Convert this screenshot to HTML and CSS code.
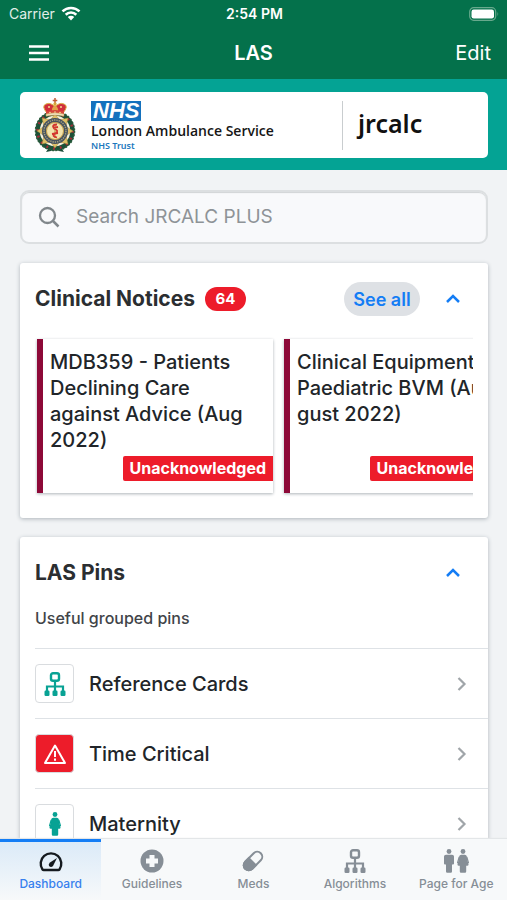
FILE: index.html
```html
<!DOCTYPE html>
<html lang="en">
<head>
<meta charset="utf-8">
<meta name="viewport" content="width=device-width, initial-scale=1">
<title>LAS</title>
<link rel="stylesheet" href="styles.css">
</head>
<body>
<svg class="defs" width="0" height="0" aria-hidden="true">
  <symbol id="tree" viewBox="0 0 22 24">
    <rect x="7" y="1.200" width="8" height="7.600" rx="2" fill="none" stroke="currentColor" stroke-width="2.400"/>
    <path d="M11 9v11M3 20v-5.500h16V20" fill="none" stroke="currentColor" stroke-width="2.200"/>
    <rect x=".5" y="18.500" width="5" height="5.500" rx="1.200" fill="currentColor"/>
    <rect x="8.500" y="18.500" width="5" height="5.500" rx="1.200" fill="currentColor"/>
    <rect x="16.500" y="18.500" width="5" height="5.500" rx="1.200" fill="currentColor"/>
  </symbol>
  <symbol id="woman" viewBox="0 0 12 24">
    <circle cx="6" cy="2.500" r="2.400" fill="currentColor"/>
    <path d="M4.200 5.800h3.600q1.600 0 2 1.500l.3 3 1.400 5q.3 1.400-1 1.400H9.200v5.800q0 1.300-1.200 1.300H4q-1.200 0-1.200-1.300v-5.800H1.500q-1.300 0-1-1.400l1.400-5 .3-3q.4-1.500 2-1.500z" fill="currentColor"/>
    <path d="M2.200 8L.6 13.500l1.500.6M9.800 8l1.600 5.500-1.500.6" fill="none" stroke="currentColor" stroke-width="1.200"/>
  </symbol>
  <symbol id="man" viewBox="0 0 12 24">
    <circle cx="6" cy="2.500" r="2.400" fill="currentColor"/>
    <path d="M3 5.800h6q2 0 2 1.800v7q0 1-1 1H9v7q0 1.200-1.200 1.200H4.200Q3 23.800 3 22.600v-7H2q-1 0-1-1v-7q0-1.800 2-1.800z" fill="currentColor"/>
  </symbol>
  <symbol id="next" viewBox="0 0 10 16">
    <path d="M1.500 2l6 6-6 6" fill="none" stroke="currentColor" stroke-width="2.200"/>
  </symbol>
  <symbol id="up" viewBox="0 0 16 10">
    <path d="M2 8l6-6 6 6" fill="none" stroke="currentColor" stroke-width="2.500"/>
  </symbol>
</svg>
<div class="app">
  <header class="top">
    <div class="status">
      <span class="carrier">Carrier
        <svg width="20" height="15" viewBox="0 0 20 15" aria-hidden="true"><g fill="none" stroke="currentColor" stroke-width="2.600"><path d="M1.500 5.400a12.200 12.200 0 0 1 17 0M4.700 8.700a7.600 7.600 0 0 1 10.600 0"/></g><path d="M10 14.500l-3.200-3.400a4.500 4.500 0 0 1 6.400 0z" fill="currentColor"/></svg>
      </span>
      <span class="time">2:54 PM</span>
      <svg class="battery" width="31" height="14" viewBox="0 0 31 14" aria-hidden="true"><rect x=".7" y=".7" width="26" height="12.600" rx="4" fill="none" stroke="#68a98d" stroke-width="1.200"/><rect x="2.500" y="2.500" width="22.500" height="9" rx="2.200" fill="#fff"/><path d="M28.500 4.800q1.500 2.200 0 4.400z" fill="#68a98d"/></svg>
    </div>
    <div class="nav">
      <button class="menu" aria-label="Menu"><svg width="20" height="16" viewBox="0 0 20 16"><path d="M0 1.500h20M0 8h20M0 14.500h20" stroke="currentColor" stroke-width="2.400"/></svg></button>
      <h1>LAS</h1>
      <button class="edit">Edit</button>
    </div>
  </header>
  <div class="brand">
    <div class="brand-card">
      <svg class="crest" width="44" height="58" viewBox="0 0 44 58" aria-hidden="true">
        <path d="M17 50l-4 6 5-1 4-4 4 4 5 1-4-6z" fill="#174936"/>
        <circle cx="22" cy="35" r="17.500" fill="#f6f0dc" stroke="#1c5038" stroke-width="4.500"/>
        <circle cx="22" cy="35" r="19.500" fill="none" stroke="#2b5c3c" stroke-width="1.500" stroke-dasharray="2 1.500"/>
        <circle cx="22" cy="35" r="17.500" fill="none" stroke="#a82c38" stroke-width="2.500" stroke-dasharray="1.800 5.060"/>
        <path d="M22 18l4.500 6 8.500-2-2 8.500 7 4.500-7 4.500 2 8.500-8.500-2-4.500 6-4.500-6-8.500 2 2-8.500-7-4.500 7-4.500-2-8.500 8.500 2z" fill="#dfc068" stroke="#ab8a3a" stroke-width=".5"/>
        <circle cx="22" cy="35" r="11" fill="none" stroke="#46525f" stroke-width="4"/>
        <circle cx="22" cy="35" r="11" fill="none" stroke="#a9a37c" stroke-width="1.400" stroke-dasharray="1.300 1"/>
        <circle cx="22" cy="35" r="8.500" fill="#f3e3ad" stroke="#b38d3c" stroke-width=".8"/>
        <path d="M22 28v14" stroke="#b3862c"/>
        <path d="M24 28.500q-6 0-3 4 6 2.500 1 5-4 2.500 2 4M25 31l-5 1M25 37l-6 1" fill="none" stroke="#d4342f" stroke-width="1.800"/>
        <path d="M14 17q-6-7-1-9 5-2 9 3 4-5 9-3 5 2-1 9z" fill="#d12f3c" stroke="#d9ae42"/>
        <path d="M22 9q-4 3-3 7h6q1-4-3-7z" fill="#e3a149"/>
        <path d="M13 15.500q9-3 18 0v4q-9-2-18 0z" fill="#d6453b"/>
        <path d="M13 18q9-2.500 18 0v2.200q-9-2-18 0z" fill="#eee0be" stroke="#c0903e" stroke-width=".5"/>
        <path d="M22 2v6M19.700 4.500h4.600" stroke="#c05b35" stroke-width="1.500"/>
        <circle cx="22" cy="8" r="1.700" fill="#d7a53a"/>
        <g fill="#f5dd91"><circle cx="16" cy="11" r="1"/><circle cx="28" cy="11" r="1"/><circle cx="17" cy="16.500" r=".8"/><circle cx="22" cy="16" r=".8"/><circle cx="27" cy="16.500" r=".8"/></g>
      </svg>
      <div class="trust">
        <span class="nhs">NHS</span>
        <strong>London Ambulance Service</strong>
        <small>NHS Trust</small>
      </div>
      <div class="jrcalc">jrcalc</div>
    </div>
  </div>
  <main>
    <label class="search">
      <svg width="22" height="22" viewBox="0 0 22 22" aria-hidden="true"><circle cx="9.500" cy="9.500" r="7.500" fill="none" stroke="currentColor" stroke-width="2.300"/><path d="M15 15l5.500 5.500" stroke="currentColor" stroke-width="2.500"/></svg>
      <input type="search" placeholder="Search JRCALC PLUS" aria-label="Search JRCALC PLUS">
    </label>
    <section class="card notices">
      <div class="card-head">
        <h2>Clinical Notices</h2><span class="count">64</span>
        <button class="see-all">See all</button>
        <button class="toggle" aria-label="Collapse Clinical Notices"><svg width="16" height="10"><use href="#up"/></svg></button>
      </div>
      <div class="strip">
        <article class="notice"><h3>MDB359 - Patients Declining Care against Advice (Aug 2022)</h3><span class="flag">Unacknowledged</span></article>
        <article class="notice"><h3>Clinical Equipment<br>Paediatric BVM (Au<br>gust 2022)</h3><span class="flag">Unacknowledged</span></article>
      </div>
    </section>
    <section class="card pins">
      <div class="card-head">
        <h2>LAS Pins</h2>
        <button class="toggle" aria-label="Collapse LAS Pins"><svg width="16" height="10"><use href="#up"/></svg></button>
      </div>
      <p>Useful grouped pins</p>
      <ul>
        <li><a href="#cards"><span class="tile"><svg width="22" height="24"><use href="#tree"/></svg></span><span class="name">Reference Cards</span><svg width="10" height="16"><use href="#next"/></svg></a></li>
        <li><a href="#critical"><span class="tile alert"><svg width="24" height="22" viewBox="0 0 24 22"><path d="M12 2.500L22 20H2z" fill="none" stroke="currentColor" stroke-width="2" stroke-linejoin="round"/><path d="M12 8v6M12 15.500v2.200" stroke="currentColor" stroke-width="2"/></svg></span><span class="name">Time Critical</span><svg width="10" height="16"><use href="#next"/></svg></a></li>
        <li><a href="#maternity"><span class="tile"><svg width="12" height="24"><use href="#woman"/></svg></span><span class="name">Maternity</span><svg width="10" height="16"><use href="#next"/></svg></a></li>
      </ul>
    </section>
  </main>
  <nav class="tabs">
    <a class="active" href="#dashboard"><svg width="26" height="24" viewBox="0 0 26 24"><path d="M4.500 20.500a10.300 10.300 0 1 1 17 0q-.4.500-1.200.500H5.700q-.8 0-1.200-.500z" fill="none" stroke="currentColor" stroke-width="2.400"/><path d="M19 9l-4 8q-2 2-4 0-1-2 1-3.500z" fill="currentColor"/></svg>Dashboard</a>
    <a href="#guidelines"><svg width="24" height="24" viewBox="0 0 24 24"><circle cx="12" cy="12" r="11.500" fill="currentColor"/><path d="M9.500 6h5v3.500H18v5h-3.500V18h-5v-3.500H6v-5h3.500z" fill="#f7f9fa"/></svg>Guidelines</a>
    <a href="#meds"><svg width="24" height="24" viewBox="0 0 24 24"><g transform="rotate(-45 12 12)"><rect x="1" y="7" width="22" height="10" rx="5" fill="none" stroke="currentColor" stroke-width="2"/><path d="M12 6v12H6A6 6 0 0 1 6 6z" fill="currentColor"/></g></svg>Meds</a>
    <a href="#algorithms"><svg width="22" height="24"><use href="#tree"/></svg>Algorithms</a>
    <a href="#age"><span class="pair"><svg width="12" height="24"><use href="#man"/></svg><svg width="12" height="24"><use href="#woman"/></svg></span>Page for Age</a>
  </nav>
</div>
</body>
</html>
```
FILE: styles.css
```css
* { box-sizing: border-box; }
body { margin: 0; font-family: Inter, "Liberation Sans", sans-serif; color: #212529; background: #f1f3f5; }
button { border: 0; padding: 0; background: none; font: inherit; color: inherit; }
a { color: inherit; text-decoration: none; }
h1, h2, h3, p, ul { margin: 0; padding: 0; }
svg { display: block; flex: none; }
.defs { position: absolute; }
.app { display: flex; flex-direction: column; height: 100vh; overflow: hidden; }
.top { flex: none; background: #04714b; color: #fff; }
.status { display: grid; grid-template-columns: 1fr auto 1fr; align-items: center; height: 26px; padding: 1px 7px 0 9px; font-size: 14px; }
.carrier { display: flex; align-items: center; gap: 6px; color: #e0eee8; }
.carrier svg { color: #fff; }
.time { font-weight: 600; }
.battery { justify-self: end; }
.nav { display: grid; grid-template-columns: 1fr auto 1fr; align-items: center; height: 53px; padding: 0 16px 0 29px; }
.nav h1 { font-size: 20px; font-weight: 600; margin-right: 13px; }
.menu { justify-self: start; }
.edit { justify-self: end; font-size: 20px; }
.brand { flex: none; padding: 13px 19px 12px 20px; background: #04a394; }
.brand-card { display: flex; align-items: center; height: 66px; background: #fff; border-radius: 5px; padding-left: 13px; }
.trust { display: flex; flex-direction: column; align-items: flex-start; margin-left: 14px; white-space: nowrap; }
.nhs { background: #1471bd; color: #fff; font: italic 800 22px/20px "Liberation Sans", sans-serif; padding: 0 2px; margin-top: 2px; }
.trust strong { font: 600 14px/20px "Open Sans", "Noto Sans", sans-serif; color: #161616; }
.trust small { font: 600 9px/10px "Noto Sans", sans-serif; color: #1b78bd; }
.jrcalc { margin-left: auto; width: 146px; height: 49px; padding-left: 15px; border-left: 1px solid #c9cdcf; font: 600 25px/44px "Noto Sans", sans-serif; color: #111; }
main { flex: 1; min-height: 0; overflow: hidden; padding: 20px 19px 0 20px; }
.search { display: flex; align-items: center; gap: 16px; height: 54px; padding: 0 16px; border: 2px solid #dcdfe1; border-radius: 9px; background: #f8f9fb; color: #81878b; box-shadow: inset 0 1px 1px #d0d3d5; }
.search input { flex: 1; min-width: 0; padding: 0; border: 0; outline: 0; background: none; font: 19px/26px Inter, sans-serif; }
.search input::placeholder { color: #8e9397; opacity: 1; }
.card { margin-top: 19px; padding: 0 15px; background: #fff; border-radius: 3px; box-shadow: 0 1px 4px #aeb4ba; }
.card-head { display: flex; align-items: center; height: 72px; }
h2 { font-size: 21px; line-height: 26px; font-weight: 700; color: #2b2e31; }
.count { margin-left: 10px; width: 41px; height: 24px; border-radius: 12px; background: #ed1c2a; color: #fff; font-size: 15px; line-height: 24px; font-weight: 700; text-align: center; }
.see-all { margin-left: auto; width: 76px; height: 34px; border-radius: 17px; background: #dee1e5; color: #147df5; font-size: 18px; font-weight: 600; }
.toggle { margin-left: auto; padding: 8px 12px; color: #147df5; }
.see-all + .toggle { margin-left: 13px; }
.notices { padding-bottom: 22px; }
.strip { display: flex; gap: 11px; overflow: hidden; padding: 4px 0 4px 2px; margin-bottom: -1px; }
.notice { flex: 0 0 236px; display: flex; flex-direction: column; height: 154px; padding: 10px 0 12px 7px; border-left: 6px solid #8d0938; box-shadow: 0 1px 3px #aeb4b8; }
h3 { font-size: 20px; line-height: 26px; font-weight: 500; padding-right: 20px; }
.notice:last-child h3 { padding-right: 0; white-space: nowrap; }
.flag { align-self: flex-end; margin-top: auto; padding: 0 7px; border-radius: 2px 0 0 2px; background: #ed1c2a; color: #fff; font-size: 16px; line-height: 25px; font-weight: 700; }
.pins p { margin-bottom: 20px; font-size: 16px; line-height: 19px; font-weight: 500; color: #414448; }
.pins ul { list-style: none; margin-right: -15px; }
.pins li { border-top: 1px solid #dee2e6; }
.pins a { display: flex; align-items: center; height: 69px; padding-right: 21px; }
.tile { display: grid; place-items: center; width: 39px; height: 39px; border: 1px solid #d9dcdf; border-radius: 4px; color: #08a294; }
.alert { background: #ed1c2a; color: #fff; }
.name { flex: 1; margin-left: 15px; font-size: 20px; line-height: 26px; font-weight: 500; }
.name + svg { color: #a0a5a9; }
.tabs { flex: none; display: grid; grid-template-columns: repeat(5, 1fr); height: 61px; background: #f7f9fa; color: #868e96; box-shadow: 0 -1px 1px #e3e6e8; position: relative; }
.tabs a { display: flex; flex-direction: column; align-items: center; padding-top: 10px; gap: 3px; font-size: 12px; line-height: 16px; font-weight: 500; white-space: nowrap; border-top: 0 solid #147df5; }
.tabs .active { border-top-width: 3px; padding-top: 7px; background: linear-gradient(#dbeaf8, #f7f9fa); color: #3780ee; }
.active svg { color: #151a1f; }
.pair { display: flex; gap: 2px; }
```
